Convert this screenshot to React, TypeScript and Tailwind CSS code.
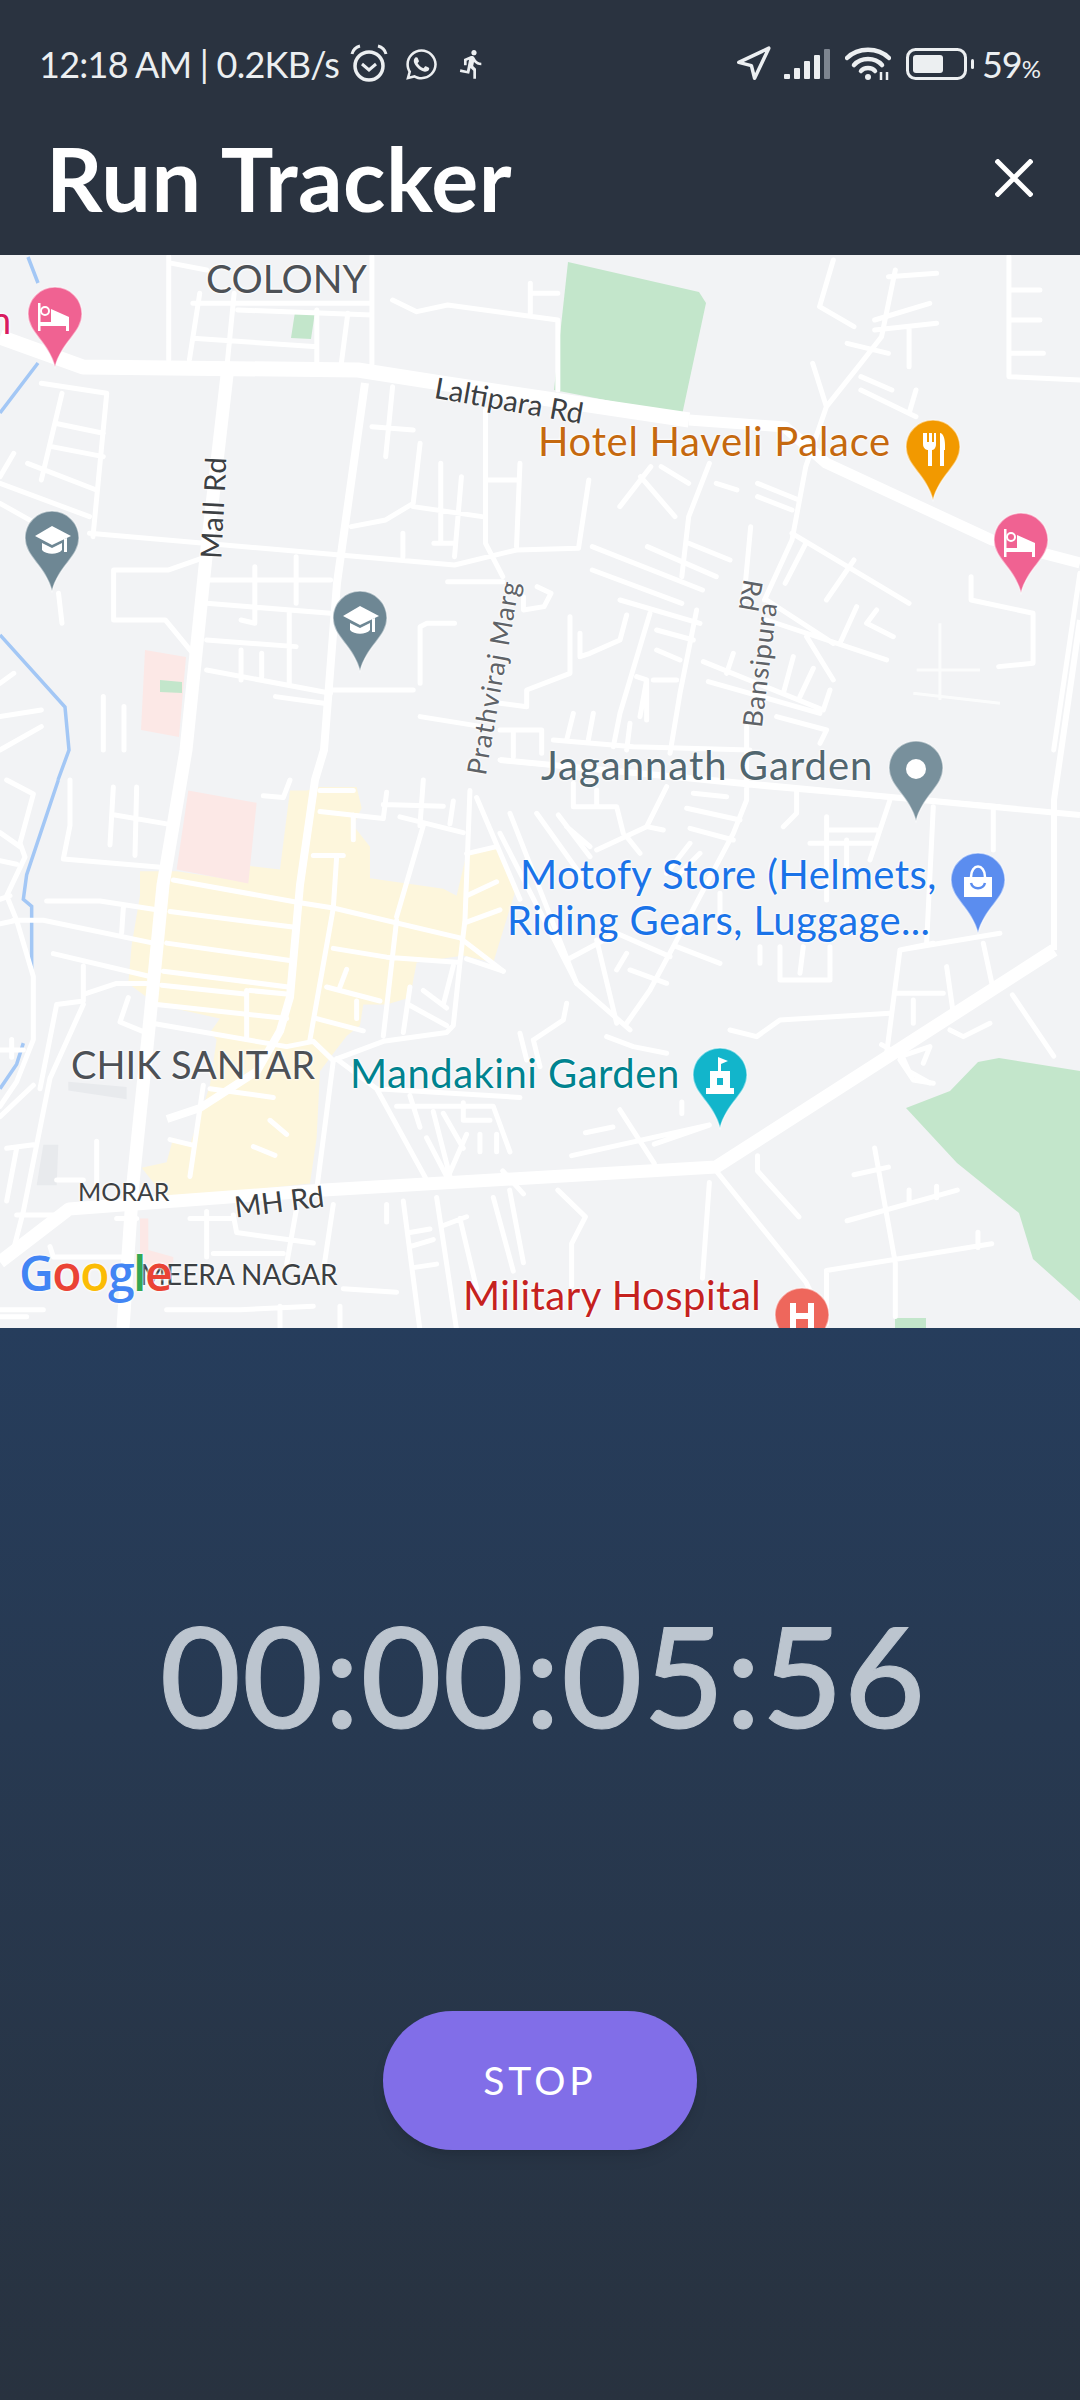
import { Navigation } from "lucide-react";
import { FaWhatsapp } from "react-icons/fa";
import { MdDirectionsRun } from "react-icons/md";

// road traces, each block in the coordinates of the map crop it was read from
const northRoads = [
  "M245 20V330M290 130L275 330M340 130L330 340M280 160H540M345 180L540 195M280 265L460 290M460 180V340M505 190L495 350M540 20V360M250 40L300 60",
  "M570 150L605 185L650 165L810 210M770 100V190M770 130H810M810 210V420",
  "M1210 30L1200 100L1190 170L1240 230M1300 60L1280 260L1250 340L1200 470M1180 340L1200 470L1170 650L1150 870L1110 1050M1230 280L1290 310M1290 80L1360 70M1270 210L1350 160M1270 240L1360 220M1320 230V350M1465 20V380L1568 390M1465 120H1510M1465 210H1510M1465 310H1515",
  "M1250 380L1295 420M1250 420L1330 500M1330 420L1320 490",
  "M60 400L155 430L135 860M90 430L60 690M80 520L150 550M75 590L150 620M40 640L140 720M0 700L130 800M0 760L60 830M0 680L20 610",
  "M130 850L660 945L750 900L840 895M540 530L600 540M570 410L560 620M610 580L600 760L560 810L510 830M640 640V880M670 680L660 920M705 480V880L730 980M705 690H750M755 640L750 890M855 690L840 895M600 770L700 800M630 880H660M585 850V920",
  "M900 770L945 650M930 680L980 800M960 650L1000 700M1030 640L1000 800L990 980M1040 700L1070 720M1100 700L1160 750M1100 740L1150 780",
  "M860 890L1020 1020M940 890L1040 980M1000 880L1060 930M860 960L990 1060M1150 850L1320 1060M1170 880L1140 1000M1240 930L1200 1050M1090 830L1080 1050",
  "M1410 980V1050L1500 1090V1240L1450 1250M1568 970L1530 1500",
  "M165 960V1110H240L280 1210M165 960H245L300 920M300 990H480M300 1060L480 1090M370 950V1120L350 1110M430 920V1060M300 1170L430 1190M300 1260L480 1330M350 1200V1290M380 1210V1280M420 1090V1300M650 995H730M660 1120H620L610 1130V1300M480 1320H600M400 1340L470 1360M780 1010L800 1030L790 1070L760 1080V1040",
  "M85 1030L90 1120M0 1300L20 1270M0 1400L60 1380M0 1500L60 1430M150 1340V1500M180 1370V1500M610 1400L700 1430",
];

const eastRoads = [
  "M210 50V220L80 270V320L0 310M380 45L360 120L270 160L240 170M240 100V170M450 40L360 340L340 440M470 90L580 120M470 150L540 180M590 30L540 280L510 460",
  "M410 230L440 240V360M440 240L420 350M460 240H530M220 340L200 420M280 340L265 420M160 420L400 440L750 450M0 390H125V460M40 400V470M390 370L380 450",
  "M610 185L970 330L990 270M625 245L960 340M880 170L850 280M940 205L900 290M700 160L680 220M830 350L980 390L960 430M800 0L1000 130M800 60L1160 180M920 110L1000 240M1020 130L1070 20M1100 70L1180 110M1130 30L1100 70M360 0L600 70",
  "M560 625L720 660M570 685L700 720M580 580L680 590M890 570V640L850 680M980 650V900M990 690H1130M930 730H1120M1170 600L1110 780M1040 720V800M1300 620L1280 1030M1480 630V750",
  "M220 550V620H350L370 700M290 570V620M500 560L440 680L290 750M30 640L230 1150M110 640L260 850M175 645L270 770M200 680L270 740M440 680L490 690M380 710L420 760M570 730L500 820M600 760L540 820",
  "M200 1080L350 1000L510 1070M290 1020L350 1270M380 1060L350 1110M390 1110L500 1150M530 1040L660 1090M660 880V1000",
  "M780 1040V1090M840 1040V1140H990V1040M910 1040L900 1120M1300 1030L1200 1050L1160 1360M1200 1050L1500 1000M1190 1180H1330M1340 1100L1360 1240M1240 1200V1270M1450 1030L1480 1170",
  "M690 1290L770 1310L840 1260L1170 1240M1350 1290L1390 1310L1470 1270M100 1320L190 1260L200 1210M60 1300L80 1380M100 1320L120 1400M320 1310L400 1340L500 1360M1200 1370L1290 1340L1270 1390M1200 1380L1240 1440L1300 1450",
];

const eastSideStreets = "M1250 210H1440M1240 280L1500 310M1320 70V300";

const eastStrongRoads = "M0 480L800 560L1500 620M740 380V600L700 700L520 1040L450 1170L380 1270M0 700L230 1150L390 1290";

const centreRoads = [
  "M210 0V130L190 225L500 250M340 20L330 185M410 20L405 215M345 100L500 125M790 45L850 50L870 0",
  "M520 285L900 350L1000 365L1380 450L1510 545M510 375L885 420M500 465L875 515M490 545L865 590M485 585L735 610M470 640L860 680",
  "M140 345H300L470 370M370 365L365 435M40 400H130L460 465M160 495L450 560M250 530V630L170 640L120 880M255 610L350 580H440M385 620L360 690L450 725M465 695L860 760L940 745L1000 800",
  "M740 600V740M750 600L860 610M1010 220L1000 365L930 740M940 215L1030 215M1000 480L1160 505L1380 520M1190 400L1150 730M1270 130L1190 390M1410 30L1395 400L1380 520L1360 700L1340 720L1150 745L1010 795",
  "M980 590L1140 630M1040 540L1020 590M1070 630V680M950 680L1090 715M1230 590L1210 720M1270 600L1340 650M1225 640L1340 700M1360 530L1330 640",
  "M960 30H1060M960 90L1150 110L1160 35M1150 70L1330 75M1200 105L1390 150M1270 0L1260 130M1360 60L1350 125M1060 100V170",
  "M1430 50L1560 340M1400 210L1490 190M1400 330L1490 290M1400 405L1500 370M1400 510L1510 545",
  "M1000 800L950 1170M1010 795L1130 880L1280 1140M1190 930H1480L1530 1060M1230 900L1260 990M1300 945L1350 1130M1280 1020L1340 1130M1330 950L1390 1050M1400 1010L1340 1140M1390 920V970H1470M1440 1010V1060M1490 1010V1060M1130 880L1560 905",
  "M610 870L570 1130M630 880L820 905M510 1025L575 1040M810 970L860 1010M760 1045L825 1070",
  "M20 0L100 40L60 180L75 220L20 330L50 400L100 560V740L50 860L0 930M0 150L60 190M0 230L50 240M0 340L30 330M0 410L50 400M0 770H70M35 740V790M0 960L100 870M250 640L150 850L70 1230L40 1340M20 1050L100 1040M50 1050L20 1200M290 1030V1150M170 1140H250",
  "M50 1240H200M620 1230V1360M570 1250H700M700 1240L710 1290L940 1320M890 1220L860 1380M1000 1210L970 1400M1160 1210V1260M1210 1200L1260 1568M1310 1190L1370 1568M1330 1270L1400 1245M1230 1290L1290 1280M1230 1330L1300 1310M1480 1190L1540 1400M1380 1250L1430 1450M1240 1390L1310 1380",
  "M150 1330L160 1360H370M500 1510H720L940 1500M640 1350H850M410 1250H350M840 1500V1568M1030 1450L1190 1460M1020 1500V1568M0 1510H130M0 1530H80",
];

const southRoads = [
  "M1470 640L1530 800M1280 770L1310 800L1320 840L1350 870",
  "M730 1100L760 1160M850 1000L890 985M900 940L950 1080M950 1030L1030 980M830 1060L1030 980M990 920V950",
  "M1040 1100L1170 1390L1200 1500M1030 1130L1020 1380M810 1150L850 1220L830 1290V1400M740 1150L760 1340M1100 1060V1100L1160 1220M1240 1110L1290 1090M1270 1040L1300 1340V1480M1230 1230L1390 1150M1320 1180V1150M1360 1140V1170M1200 1360L1440 1290M1420 1260V1300M1200 1360V1500",
];

function Pin({ x, y, color, children }: { x: number; y: number; color: string; children?: React.ReactNode }) {
  return (
    <g transform={`translate(${x - 27} ${y})`}>
      <path
        d="M27 0C12 0 0 12 0 27C0 46 20 54 27 80C34 54 54 46 54 27C54 12 42 0 27 0Z"
        fill={color}
        stroke="#ffffff"
        strokeOpacity="0.5"
        strokeWidth="1.5"
      />
      {children}
    </g>
  );
}

function BedGlyph() {
  return (
    <g fill="#fff">
      <circle cx="17" cy="24" r="4" fill="none" stroke="#fff" strokeWidth="2" />
      <path d="M10 16H12.5V35H41V44H38V39H12.5V44H10Z" />
      <path d="M23 22L41 30V35H23Z" />
    </g>
  );
}

function CapGlyph() {
  return (
    <g fill="#fff">
      <path d="M27 15L46 25L27 34L10 25Z" />
      <path d="M17 32L27 37L37 32V39C33 44 21 44 17 39Z" />
      <path d="M39 28L42 27V41H39Z" />
    </g>
  );
}

function Label({ className, children }: { className: string; children: React.ReactNode }) {
  return (
    <div className={`absolute whitespace-nowrap leading-none [font-family:Lato,sans-serif] [text-shadow:0_0_3px_#fff,0_0_3px_#fff,0_0_2px_#fff] ${className}`}>
      {children}
    </div>
  );
}

function Traces({ paths }: { paths: string[] }) {
  return (
    <>
      {paths.map((d, i) => (
        <path key={i} d={d} vectorEffect="non-scaling-stroke" />
      ))}
    </>
  );
}

function MapPanel() {
  return (
    <div className="relative h-[1073px] overflow-hidden bg-[#f2f3f5]">
      <svg className="absolute inset-0 h-full w-full" viewBox="0 255 1080 1073">
        {/* land use */}
        <path d="M568 262L699 292L706 303L682 415L554 390Z" fill="#c3e6cb" />
        <path d="M295 312L315 312L311 339L291 338Z" fill="#c3e6cb" />
        <path d="M999 1058L1080 1071V1301L1033 1259L1019 1213L957 1163L906 1108L950 1091L978 1062Z" fill="#c3e6cb" />
        <path d="M895 1318H926V1328H895Z" fill="#c3e6cb" />
        <path d="M145 650L186 657L179 737L141 730Z" fill="#fce8e6" />
        <path d="M160 680L182 682V693L160 692Z" fill="#c3e6cb" />
        <g transform="translate(0 780) scale(0.3333 0.3508)">
          <path d="M960 20H1070L1085 80L1060 130L1110 190V280L1330 310L1370 330L1400 210L1490 190L1545 320L1480 520L1390 500L1250 520L1230 620L1160 640H1090L1080 700L1040 730L1000 780L960 830L950 1020L930 1150L500 1195L425 1105L500 1090L520 1020L570 1040L630 870L650 740L630 720L660 680L470 640L385 580L395 470L420 330V260H530L740 290L750 245L840 255L870 30H920Z" fill="#fdf6dc" />
          <path d="M565 30L770 65L745 295L530 255Z" fill="#fce8e6" />
          <path d="M420 1250H445V1340L520 1360V1390H420Z" fill="#fce8e6" />
          <path d="M205 860L380 875V910L205 885Z" fill="#e8eaed" />
          <path d="M130 1040H175L170 1155H110Z" fill="#e8eaed" />
        </g>
        {/* river */}
        <g fill="none" stroke="#a3c7f5" strokeWidth="3.5">
          <path d="M28 257L38 283M38 363L0 413M0 635L65 707L69 750L58 780" />
          <g transform="translate(0 780) scale(0.3333 0.3508)">
            <Traces paths={["M175 0L80 270L70 340L95 360V540", "M70 750L50 810L0 880"]} />
          </g>
        </g>
        {/* minor roads */}
        <g fill="none" stroke="#fff" strokeWidth="5" strokeLinejoin="round" strokeLinecap="round">
          <g transform="translate(0 250) scale(0.6887 0.3333)"><Traces paths={northRoads} /></g>
          <g transform="translate(500 600) scale(0.3333)">
            <Traces paths={eastRoads} />
            <Traces paths={[eastStrongRoads]} />
          </g>
          <g transform="translate(0 780) scale(0.3333 0.3508)"><Traces paths={centreRoads} /></g>
          <g transform="translate(0 750) scale(0.6887 0.3827)"><Traces paths={southRoads} /></g>
        </g>
        <g fill="none" stroke="#fff" strokeWidth="3" transform="translate(500 600) scale(0.3333)" opacity="0.75">
          <path d={eastSideStreets} vectorEffect="non-scaling-stroke" />
        </g>
        {/* main roads */}
        <g fill="none" stroke="#fff" strokeLinejoin="round">
          <path d="M0 337L83 367L358 370L441 383L689 420" strokeWidth="15" />
          <path d="M689 420L785 427L826 463L992 540L1080 563" strokeWidth="11" />
          <path d="M0 1262L69 1209L324 1190L716 1167L1054 950" strokeWidth="13" />
          <path d="M1054 950V800L1080 620" strokeWidth="6" />
          <path d="M227 375L206 557L186 750L163 885L150 1018L133 1183L123 1328" strokeWidth="13" />
          <path d="M365 383L337 583L324 750L315 780L300 885L290 997L280 1031L257 1071L200 1108L167 1119" strokeWidth="8" />
          <path d="M500 760L1080 815" strokeWidth="6" />
        </g>
        {/* pins */}
        <Pin x={55} y={287} color="#f06292"><BedGlyph /></Pin>
        <Pin x={933} y={420} color="#f29900">
          <path d="M17 13V24C17 29 21 30 22 30V46H26V30C27 30 30 29 30 24V13H28V22H26V13H23V22H21V13ZM34 13C37 13 39 18 39 25V30H38V46H34Z" fill="#fff" />
        </Pin>
        <Pin x={1021} y={513} color="#f06292"><BedGlyph /></Pin>
        <Pin x={52} y={511} color="#6e8794"><CapGlyph /></Pin>
        <Pin x={360} y={591} color="#6e8794"><CapGlyph /></Pin>
        <Pin x={916} y={741} color="#78909c"><circle cx="27" cy="28" r="10" fill="#fff" /></Pin>
        <Pin x={978} y={853} color="#5b8def">
          <path d="M13 24H41V44H13Z" fill="#fff" />
          <path d="M20 24C20 10 34 10 34 24" fill="none" stroke="#fff" strokeWidth="2.5" />
          <path d="M20 30C22 37 32 37 34 30" fill="none" stroke="#5b8def" strokeWidth="2.5" />
        </Pin>
        <Pin x={720} y={1048} color="#12b5cb">
          <path d="M25 9L35 13L28 16V23H37V40H41V46H13V40H17V23H25ZM24 30V37H30V30Z" fill="#fff" fillRule="evenodd" />
        </Pin>
        <Pin x={802} y={1288} color="#ee675c">
          <path d="M15 15H21V25H33V15H39V44H33V31H21V44H15Z" fill="#fff" />
        </Pin>
      </svg>

      {/* labels, offsets measured from the top of the map */}
      <Label className="left-[-10px] top-[45px] text-[38px] text-[#d81b60]">n</Label>
      <Label className="left-[-14px] top-[282px] text-[38px] text-[#4b7a72]">l</Label>
      <Label className="left-[206px] top-[4px] text-[39px] text-[#4d5156]">COLONY</Label>
      <Label className="left-[434px] top-[130px] rotate-[10deg] text-[29px] text-[#3c4043]">Laltipara Rd</Label>
      <Label className="left-[161px] top-[238px] -rotate-[87deg] text-[29px] tracking-[1px] text-[#3c4043]">Mall Rd</Label>
      <Label className="left-[394px] top-[409px] -rotate-[80deg] text-[27px] tracking-[1px] text-[#5f6368]">Prathviraj Marg</Label>
      <Label className="left-[696px] top-[396px] -rotate-[83deg] text-[27px] tracking-[1px] text-[#5f6368]">Bansipura</Label>
      <Label className="left-[736px] top-[327px] rotate-[100deg] text-[27px] text-[#5f6368]">Rd</Label>
      <Label className="left-[538px] top-[166px] text-[40px] tracking-[0.7px] text-[#c5690f]">Hotel Haveli Palace</Label>
      <Label className="left-[541px] top-[490px] text-[40px] tracking-[1px] text-[#51666f]">Jagannath Garden</Label>
      <Label className="left-[520px] top-[599px] text-[40px] tracking-[0.4px] text-[#1a73e8]">Motofy Store (Helmets,</Label>
      <Label className="left-[507px] top-[645px] text-[40px] tracking-[0.4px] text-[#1a73e8]">Riding Gears, Luggage...</Label>
      <Label className="left-[71px] top-[790px] text-[38px] text-[#4d5156]">CHIK SANTAR</Label>
      <Label className="left-[350px] top-[798px] text-[40px] tracking-[0.5px] text-[#00838f]">Mandakini Garden</Label>
      <Label className="left-[78px] top-[924px] text-[25px] text-[#3c4043]">MORAR</Label>
      <Label className="left-[234px] top-[931px] -rotate-[7deg] text-[29px] text-[#3c4043]">MH Rd</Label>
      <Label className="left-[140px] top-[1005px] text-[28px] text-[#3c4043]">MEERA NAGAR</Label>
      <Label className="left-[463px] top-[1020px] text-[40px] tracking-[0.5px] text-[#c5221f]">Military Hospital</Label>
      <div className="absolute left-[19px] top-[994px] text-[48px] font-semibold leading-none tracking-[-1.5px] [font-family:'Open_Sans',sans-serif] [text-shadow:0_0_3px_#fff,0_0_3px_#fff]">
        <span className="text-[#4285f4]">G</span>
        <span className="text-[#ea4335]">o</span>
        <span className="text-[#fbbc05]">o</span>
        <span className="text-[#4285f4]">g</span>
        <span className="text-[#34a853]">l</span>
        <span className="text-[#ea4335]">e</span>
      </div>
    </div>
  );
}

function StatusBar() {
  return (
    <div className="flex h-[48px] items-center justify-between pl-[39px] pr-[40px] text-[#eceff1] [font-family:Lato,sans-serif]">
      <div className="flex items-center">
        <span className="w-[306px] whitespace-nowrap text-[36px] leading-none tracking-[-0.75px]">12:18 AM | 0.2KB/s</span>
        <svg className="ml-[4px] h-[40px] w-[40px]" viewBox="0 0 40 40" fill="none" stroke="currentColor" strokeWidth="3.5">
          <circle cx="20" cy="22" r="14" />
          <path d="M13 20L20 26L27 20" strokeWidth="3" />
          <path d="M3 10C4 6 7 3 11 2M37 10C36 6 33 3 29 2" strokeWidth="3" />
        </svg>
        <FaWhatsapp className="ml-[15px] h-[35px] w-[35px]" />
        <MdDirectionsRun className="ml-[17px] h-[36px] w-[32px]" />
      </div>
      <div className="flex items-center">
        <Navigation className="h-[38px] w-[38px]" strokeWidth={2.2} />
        <svg className="ml-[11px] h-[32px] w-[50px]" viewBox="0 0 50 32" fill="currentColor">
          <rect x="1" y="26" width="6" height="5" rx="1" />
          <rect x="11" y="20" width="6" height="11" rx="1" />
          <rect x="21" y="13" width="6" height="18" rx="1" />
          <rect x="31" y="7" width="6" height="24" rx="1" />
          <rect x="41" y="1" width="6" height="30" rx="1" fill="#7d8590" />
        </svg>
        <svg className="ml-[12px] h-[34px] w-[46px]" viewBox="0 0 46 34" fill="none" stroke="currentColor" strokeWidth="4.5" strokeLinecap="round">
          <path d="M2 11C13 0 33 0 44 11" />
          <path d="M9 18C16 10 30 10 37 18" />
          <path d="M16 24C19 20 27 20 30 24" />
          <circle cx="23" cy="30" r="3" fill="currentColor" stroke="none" />
          <path d="M36 25V33M42 25V33" strokeWidth="2.5" strokeLinecap="butt" />
        </svg>
        <svg className="ml-[15px] h-[32px] w-[70px]" viewBox="0 0 70 32" fill="none">
          <rect x="1.5" y="1.5" width="58" height="29" rx="8" stroke="currentColor" strokeWidth="3" />
          <rect x="7" y="7" width="30" height="18" rx="3" fill="currentColor" />
          <rect x="65" y="11" width="3" height="10" rx="1.5" fill="currentColor" />
        </svg>
        <span className="ml-[6px] whitespace-nowrap text-[36px] leading-none tracking-[-1px]">
          59<span className="text-[24px]">%</span>
        </span>
      </div>
    </div>
  );
}

export default function App() {
  return (
    <div className="flex h-[2400px] w-[1080px] flex-col overflow-hidden">
      <div className="h-[255px] bg-[#2a3340] pt-[40px]">
        <StatusBar />
        <div className="flex items-center justify-between pl-[46px] pr-[47px] pt-[44px]">
          <h1 className="text-[88px] font-bold leading-[92px] tracking-[0.5px] text-white [font-family:Lato,sans-serif]">Run Tracker</h1>
          <svg className="h-[38px] w-[38px]" viewBox="0 0 38 38" stroke="#fff" strokeWidth="5">
            <path d="M1 1L37 37M37 1L1 37" />
          </svg>
        </div>
      </div>

      <MapPanel />

      <div className="flex flex-1 flex-col items-center bg-gradient-to-b from-[#263d5c] to-[#28323f]">
        <div className="ml-[6px] mt-[266px] text-[140px] font-medium leading-[160px] tracking-[1px] text-[#bcc5cf] [-webkit-text-stroke:1px_#bcc5cf] [font-family:Lato,sans-serif]">00:00:05:56</div>
        <button className="mt-[257px] flex h-[139px] w-[314px] items-center justify-center rounded-[70px] bg-[#816ee8] text-[39px] tracking-[4px] text-white shadow-lg [font-family:Lato,sans-serif]">
          STOP
        </button>
      </div>
    </div>
  );
}
